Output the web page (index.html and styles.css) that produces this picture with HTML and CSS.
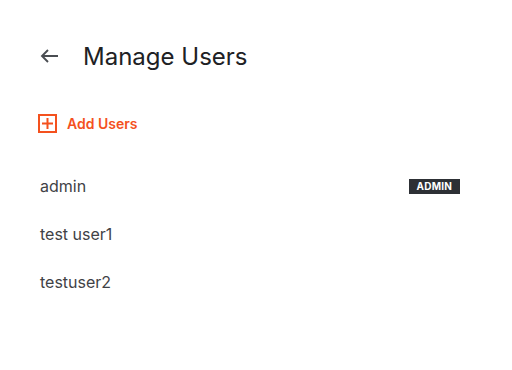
FILE: index.html
```html
<!DOCTYPE html>
<html lang="en">
<head>
  <meta charset="UTF-8">
  <meta name="viewport" content="width=device-width, initial-scale=1.0">
  <title>Manage Users</title>
  <link rel="stylesheet" href="styles.css">
</head>
<body>
  <div class="page">
    <header class="header">
      <button class="back" aria-label="Back">
        <svg width="18" height="14" viewBox="0 0 18 14" fill="none" stroke="#4a4d52" stroke-width="1.9">
          <path d="M18 7H2M8 1L2 7l6 6"/>
        </svg>
      </button>
      <h1>Manage Users</h1>
    </header>

    <button class="add">
      <span class="add-icon">
        <svg width="11" height="11" viewBox="0 0 11 11" stroke="#f4511e" stroke-width="2">
          <path d="M5.5 0v11M0 5.5h11"/>
        </svg>
      </span>
      Add Users
    </button>

    <ul class="users">
      <li class="user">
        <span class="name">admin</span>
        <span class="badge">ADMIN</span>
      </li>
      <li class="user">
        <span class="name">test user1</span>
      </li>
      <li class="user">
        <span class="name">testuser2</span>
      </li>
    </ul>
  </div>
</body>
</html>
```

FILE: styles.css
```css
* {
  margin: 0;
  padding: 0;
  box-sizing: border-box;
  font-family: Inter, 'Noto Sans', sans-serif;
}

body {
  background: #ffffff;
  color: #3c4043;
}

.page {
  width: 512px;
  padding: 40px 52px 0 38px;
}

.header {
  display: flex;
  align-items: center;
  height: 32px;
}

.back {
  display: flex;
  background: none;
  border: none;
  margin-left: 2px;
  margin-right: 25px;
  cursor: pointer;
}

h1 {
  font-size: 24px;
  font-weight: 400;
  color: #202124;
}

.add {
  display: flex;
  align-items: center;
  gap: 10px;
  margin-top: 42px;
  background: none;
  border: none;
  color: #f4511e;
  font-size: 14px;
  font-weight: 600;
  cursor: pointer;
}

.add-icon {
  width: 19px;
  height: 19px;
  border: 2px solid #f4511e;
  display: flex;
  align-items: center;
  justify-content: center;
}

.users {
  list-style: none;
  margin-top: 29px;
}

.user {
  display: flex;
  align-items: center;
  justify-content: space-between;
  height: 48px;
  padding-left: 2px;
}

.name {
  font-size: 16px;
  color: #3f4246;
}

.badge {
  background: #2d3035;
  color: #ffffff;
  font-size: 10px;
  font-weight: 700;
  padding: 0 8px;
  height: 15px;
  line-height: 15px;
  letter-spacing: 0.2px;
}
```
